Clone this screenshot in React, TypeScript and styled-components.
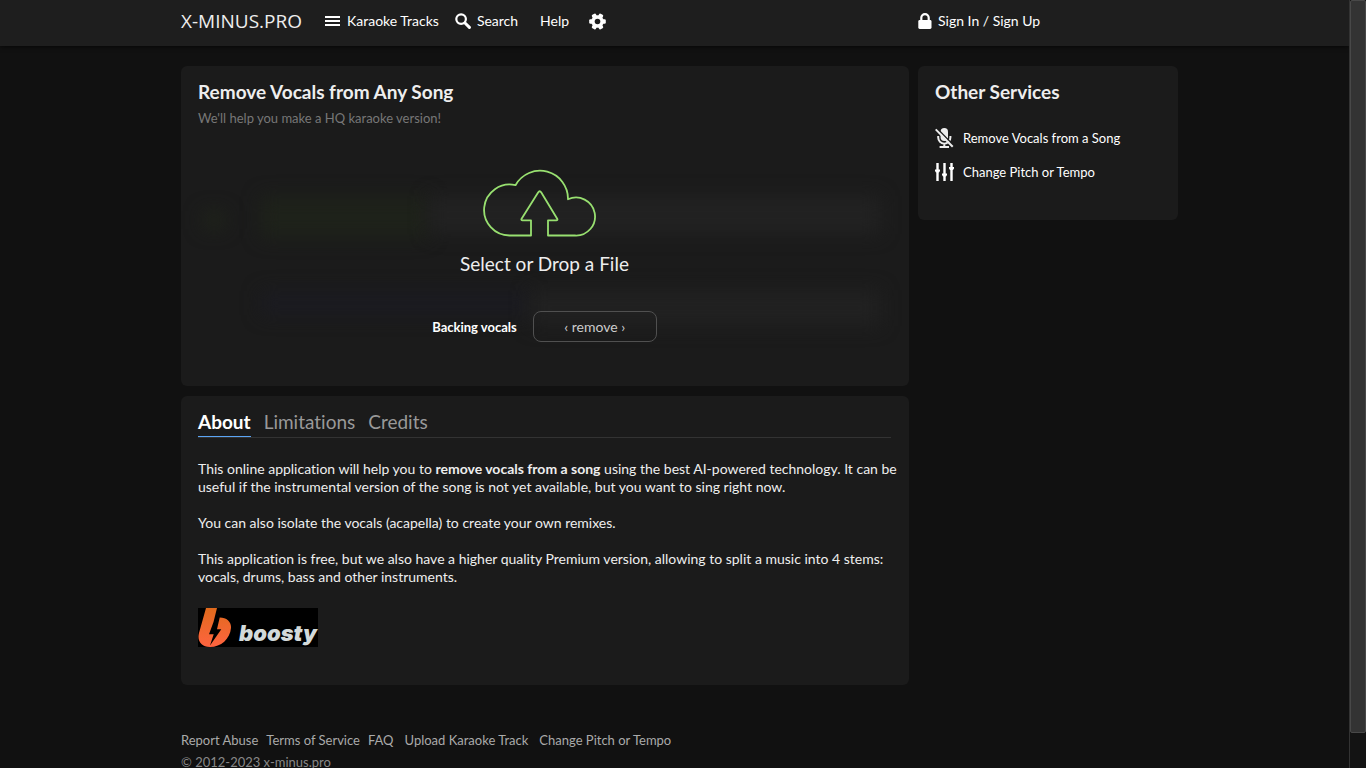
import React from "react";
import styled, { createGlobalStyle } from "styled-components";

const sans = `Lato, "Noto Sans", sans-serif`;

const GlobalStyle = createGlobalStyle`
  *, *::before, *::after { box-sizing: border-box; }
  body {
    margin: 0;
    background: #111;
    color: #eee;
    font-family: ${sans};
    font-size: 14px;
    line-height: 18px;
    font-variant-ligatures: none;
  }
  h1, h2, p, ul { margin: 0; padding: 0; }
  ul { list-style: none; }
  a { color: inherit; text-decoration: none; }
  button { font: inherit; color: inherit; background: none; border: 0; padding: 0; cursor: pointer; }
`;

const Window = styled.div`
  display: flex;
  height: 100vh;
  overflow: hidden;
`;

const Page = styled.div`
  flex: 1;
  min-width: 0;
`;

const ScrollTrack = styled.div`
  flex: none;
  width: 17px;
  background: #131313;
  border-left: 1px solid #333;
`;

const ScrollThumb = styled.div`
  height: 95.5%;
  background: #333;
  border: 1px solid #484848;
  border-radius: 2px;
`;

const Container = styled.div`
  max-width: 1007px;
  margin: 0 auto;
  padding-left: 10px;
`;

const Columns = styled(Container)`
  display: grid;
  grid-template-columns: minmax(0, 1fr) 260px;
  column-gap: 9px;
  align-items: start;
`;

const Header = styled.header`
  background: #1e1e1e;
  box-shadow: 0 1px 4px rgba(0, 0, 0, 0.6);
`;

const Nav = styled.nav`
  display: flex;
  align-items: center;
  height: 46px;
  padding-bottom: 4px;
`;

const Logo = styled.a`
  width: 144px;
  font-family: "Open Sans", sans-serif;
  font-size: 19px;
  line-height: 24px;
`;

const NavLink = styled.a<{ $gap: number }>`
  display: flex;
  align-items: center;
  gap: 6px;
  margin-right: ${(p) => p.$gap}px;
  color: #fff;
  white-space: nowrap;
`;

const Main = styled.main`
  display: grid;
  gap: 10px;
  margin-top: 20px;
`;

const Panel = styled.section<{ $height: number }>`
  position: relative;
  min-height: ${(p) => p.$height}px;
  padding: 14px 18px 14px 17px;
  background: #1b1b1b;
  border-radius: 6px;
`;

const Side = styled.aside`
  margin-top: 20px;
`;

const Title = styled.h1`
  font-size: 19px;
  font-weight: 700;
  line-height: 24px;
`;

const Subtitle = styled.p`
  margin-top: 5px;
  color: #777;
  font-size: 13px;
`;

const Glow = styled.div<{ $left: number; $right: number; $top: number; $height: number; $color: string }>`
  position: absolute;
  left: ${(p) => p.$left}%;
  right: ${(p) => p.$right}%;
  top: ${(p) => p.$top}px;
  height: ${(p) => p.$height}px;
  background: ${(p) => p.$color};
  filter: blur(9px);
`;

const Upload = styled.div`
  position: relative;
  display: flex;
  flex-direction: column;
  align-items: center;
  padding-top: 41px;
`;

const DropButton = styled.button`
  display: flex;
  flex-direction: column;
  align-items: center;
  gap: 13px;
  font-size: 19px;
  line-height: 26px;
`;

const Option = styled.div`
  display: flex;
  align-items: center;
  gap: 16px;
  margin-top: 34px;
`;

const OptionLabel = styled.span`
  color: #fff;
  font-size: 13px;
  font-weight: 700;
`;

const ModeButton = styled.button`
  width: 124px;
  height: 31px;
  border: 1px solid #505050;
  border-radius: 8px;
  color: #ccc;
`;

const Tabs = styled.div`
  display: flex;
  gap: 13px;
  height: 28px;
  border-bottom: 1px solid #333;
`;

const Tab = styled.button<{ $active?: boolean }>`
  height: 27px;
  padding-bottom: 2px;
  border-bottom: 1px solid ${(p) => (p.$active ? "#5ba5f5" : "transparent")};
  color: ${(p) => (p.$active ? "#fff" : "#999")};
  font-size: 19px;
  font-weight: ${(p) => (p.$active ? 700 : 400)};
  line-height: 24px;
`;

const Copy = styled.div`
  display: grid;
  gap: 18px;
  margin: 22px -12px 0 0;
`;

const BoostyLink = styled.a`
  display: block;
  width: 121px;
  height: 39px;
  margin-top: 22px;
`;

const Services = styled.ul`
  display: grid;
  gap: 14px;
  margin-top: 24px;
  font-size: 13px;
`;

const ServiceLink = styled.a`
  display: flex;
  align-items: center;
  gap: 9px;
  height: 20px;
  color: #fff;
`;

const Footer = styled.footer`
  margin-top: 46px;
  color: #aaa;
  font-size: 13px;
`;

const FooterLinks = styled.div`
  display: flex;
  margin-bottom: 4px;
`;

const FooterLink = styled.a<{ $gap: number }>`
  margin-right: ${(p) => p.$gap}px;
`;

const Copyright = styled.p`
  color: #888;
`;

const MenuIcon = () => (
  <svg width="16" height="16" viewBox="0 0 16 16" fill="#fff">
    <path d="M0 3h15v2H0zM0 7h15v2H0zM0 11h15v2H0z" />
  </svg>
);

const SearchIcon = () => (
  <svg width="16" height="16" viewBox="0 0 16 16" fill="none" stroke="#fff">
    <circle cx="6.1" cy="6.1" r="4.8" strokeWidth="2.2" />
    <path d="M10 10l4.400 4.400" strokeWidth="3" strokeLinecap="round" />
  </svg>
);

const GearIcon = () => (
  <svg width="17" height="17" viewBox="0 0 17 17">
    <g fill="#fff">
      {[0, 60, 120].map((angle) => (
        <rect key={angle} x="0.2" y="6.200" width="16.600" height="4.600" rx="1.2" transform={`rotate(${angle} 8.5 8.5)`} />
      ))}
      <circle cx="8.5" cy="8.5" r="6.2" />
    </g>
    <circle cx="8.5" cy="8.5" r="2.8" fill="#1e1e1e" />
  </svg>
);

const LockIcon = () => (
  <svg width="14" height="16" viewBox="0 0 14 16">
    <path d="M3.3 8V4.8a3.7 3.7 0 0 1 7.4 0V8" fill="none" stroke="#fff" strokeWidth="2.2" />
    <rect x="0.3" y="7" width="13.2" height="9" rx="1.4" fill="#fff" />
  </svg>
);

const MicOffIcon = () => (
  <svg width="19" height="20" viewBox="0 0 19 20">
    <rect x="5.6" y="0" width="7.4" height="13" rx="3.7" fill="#eee" />
    <path d="M3.2 8v1.600a6.100 6.100 0 0 0 12.200 0V8M9.300 15.500v3.500M4.600 19h9.400" fill="none" stroke="#eee" strokeWidth="2" />
    <path d="M1.900 0.200l17 17.400" stroke="#1b1b1b" strokeWidth="1.4" />
    <path d="M0.700 1.400l17 17.400" stroke="#eee" strokeWidth="2" />
  </svg>
);

const SlidersIcon = () => (
  <svg width="19" height="20" viewBox="0 0 19 20" fill="#fff">
    <path d="M1.300 1h2.400v18h-2.400zM8.300 1h2.400v18h-2.400zM15.300 1h2.400v18h-2.400z" />
    <path d="M0 7.500h5v1.500l-1 1.500h-3l-1-1.500zM7 11.500h5v1.500l-1 1.500h-3l-1-1.500zM14 5h5v1.500l-1 1.500h-3l-1-1.500z" />
  </svg>
);

const CloudIcon = () => (
  <svg width="122" height="70" viewBox="0 0 122 70" fill="none" stroke="#98e070" strokeWidth="1.8" strokeLinejoin="round">
    <path d="M48 67.500H27A25.500 25.500 0 1 1 32.500 17.200A28 28 0 0 1 85 31.300A19 19 0 1 1 92 67.500H65V52.300H73.300Q75 52.300 74.200 50.700L58.300 24.500Q56.700 22 55.100 24.500L38.600 50.700Q37.800 52.300 39.500 52.300H48Z" />
  </svg>
);

const BoostyLogo = () => (
  <svg width="121" height="39" viewBox="0 0 121 39">
    <defs>
      <linearGradient id="flame" x1="0" y1="0" x2="0" y2="1">
        <stop offset="0" stopColor="#e06a1c" />
        <stop offset="1" stopColor="#ff6440" />
      </linearGradient>
    </defs>
    <rect width="120" height="39" fill="#000" />
    <path
      d="M8 0H19L15.500 14L11 26.300H15.700L12 37.500L23.300 21.300H19L21.700 9.500C29 9.500 33.500 14 33 20C32 31 23 39 12 39C3 39-1 33 1 25Z"
      fill="url(#flame)"
    />
    <text x="41" y="33" fill="#d3dada" fontFamily="Inter, sans-serif" fontSize="22" fontWeight="900" fontStyle="italic">boosty</text>
  </svg>
);

export default function App() {
  return (
    <>
      <GlobalStyle />
      <Window>
        <Page>
          <Header>
            <Columns>
              <Nav aria-label="Main">
                <Logo href="#">X-MINUS.PRO</Logo>
                <NavLink href="#tracks" $gap={16}><MenuIcon />Karaoke Tracks</NavLink>
                <NavLink href="#search" $gap={22}><SearchIcon />Search</NavLink>
                <NavLink href="#help" $gap={20}>Help</NavLink>
                <NavLink href="#settings" $gap={0} aria-label="Settings"><GearIcon /></NavLink>
              </Nav>
              <Nav aria-label="Account">
                <NavLink href="#signin" $gap={0}><LockIcon />Sign In / Sign Up</NavLink>
              </Nav>
            </Columns>
          </Header>
          <Columns>
            <Main>
              <Panel $height={320}>
                <Glow $left={3} $right={94} $top={145} $height={18} $color="#1f231a" />
                <Glow $left={11} $right={66} $top={130} $height={42} $color="#1e221a" />
                <Glow $left={34} $right={4} $top={130} $height={38} $color="#222" />
                <Glow $left={11} $right={52} $top={225} $height={24} $color="#1b1b21" />
                <Glow $left={48} $right={4} $top={224} $height={36} $color="#212121" />
                <Title>Remove Vocals from Any Song</Title>
                <Subtitle>We'll help you make a HQ karaoke version!</Subtitle>
                <Upload>
                  <DropButton type="button"><CloudIcon />Select or Drop a File</DropButton>
                  <Option>
                    <OptionLabel id="backing">Backing vocals</OptionLabel>
                    <ModeButton type="button" aria-describedby="backing">‹ remove ›</ModeButton>
                  </Option>
                </Upload>
              </Panel>
              <Panel $height={289}>
                <Tabs role="tablist">
                  <Tab role="tab" aria-selected $active>About</Tab>
                  <Tab role="tab">Limitations</Tab>
                  <Tab role="tab">Credits</Tab>
                </Tabs>
                <Copy>
                  <p>
                    This online application will help you to <b>remove vocals from a song</b> using the best AI-powered
                    technology. It can be useful if the instrumental version of the song is not yet available, but you
                    want to sing right now.
                  </p>
                  <p>You can also isolate the vocals (acapella) to create your own remixes.</p>
                  <p>
                    This application is free, but we also have a higher quality Premium version, allowing to split a
                    music into 4 stems: vocals, drums, bass and other instruments.
                  </p>
                </Copy>
                <BoostyLink href="#boosty" aria-label="Boosty"><BoostyLogo /></BoostyLink>
              </Panel>
            </Main>
            <Side>
              <Panel as="div" $height={154}>
                <Title as="h2">Other Services</Title>
                <Services>
                  <li><ServiceLink href="#remove"><MicOffIcon />Remove Vocals from a Song</ServiceLink></li>
                  <li><ServiceLink href="#pitch"><SlidersIcon />Change Pitch or Tempo</ServiceLink></li>
                </Services>
              </Panel>
            </Side>
          </Columns>
          <Container>
            <Footer>
              <FooterLinks>
                <FooterLink href="#abuse" $gap={8}>Report Abuse</FooterLink>
                <FooterLink href="#terms" $gap={8}>Terms of Service</FooterLink>
                <FooterLink href="#faq" $gap={11}>FAQ</FooterLink>
                <FooterLink href="#upload" $gap={11}>Upload Karaoke Track</FooterLink>
                <FooterLink href="#change" $gap={0}>Change Pitch or Tempo</FooterLink>
              </FooterLinks>
              <Copyright>© 2012-2023 x-minus.pro</Copyright>
            </Footer>
          </Container>
        </Page>
        <ScrollTrack aria-hidden="true"><ScrollThumb /></ScrollTrack>
      </Window>
    </>
  );
}
